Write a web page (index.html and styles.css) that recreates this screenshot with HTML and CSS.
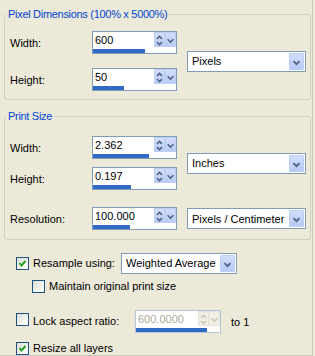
FILE: index.html
```html
<!DOCTYPE html>
<html lang="en">
<head>
  <meta charset="UTF-8">
  <title>Resize</title>
  <link rel="stylesheet" href="styles.css">
</head>
<body>
  <div class="dialog">

    <fieldset class="group group-pixels">
      <legend>Pixel Dimensions (100% x 5000%)</legend>
      <div class="grid">
        <label class="field-label">Width:</label>
        <div class="spin">
          <div class="spin-top">
            <span class="spin-text">600</span>
            <span class="spin-btn updown"><svg width="11" height="15" viewBox="0 0 11 15"><path d="M2.5 5.5 L5.5 2.5 L8.5 5.5 M2.5 9.5 L5.5 12.5 L8.5 9.5" /></svg></span>
            <span class="spin-btn drop"><svg width="11" height="15" viewBox="0 0 11 15"><path d="M2 6 L5.5 9.5 L9 6" /></svg></span>
          </div>
          <div class="spin-bar"><span class="spin-fill" style="width:63%"></span></div>
        </div>
        <label class="field-label">Height:</label>
        <div class="spin">
          <div class="spin-top">
            <span class="spin-text">50</span>
            <span class="spin-btn updown"><svg width="11" height="15" viewBox="0 0 11 15"><path d="M2.5 5.5 L5.5 2.5 L8.5 5.5 M2.5 9.5 L5.5 12.5 L8.5 9.5" /></svg></span>
            <span class="spin-btn drop"><svg width="11" height="15" viewBox="0 0 11 15"><path d="M2 6 L5.5 9.5 L9 6" /></svg></span>
          </div>
          <div class="spin-bar"><span class="spin-fill" style="width:37%"></span></div>
        </div>
        <div class="select select-span">
          <span class="select-text">Pixels</span>
          <span class="select-btn"><svg width="15" height="17" viewBox="0 0 15 17"><path d="M4 7 L7.5 10.5 L11 7" /></svg></span>
        </div>
      </div>
    </fieldset>

    <fieldset class="group group-print">
      <legend>Print Size</legend>
      <div class="grid grid-print">
        <label class="field-label">Width:</label>
        <div class="spin">
          <div class="spin-top">
            <span class="spin-text">2.362</span>
            <span class="spin-btn updown"><svg width="11" height="15" viewBox="0 0 11 15"><path d="M2.5 5.5 L5.5 2.5 L8.5 5.5 M2.5 9.5 L5.5 12.5 L8.5 9.5" /></svg></span>
            <span class="spin-btn drop"><svg width="11" height="15" viewBox="0 0 11 15"><path d="M2 6 L5.5 9.5 L9 6" /></svg></span>
          </div>
          <div class="spin-bar"><span class="spin-fill" style="width:67%"></span></div>
        </div>
        <label class="field-label">Height:</label>
        <div class="spin">
          <div class="spin-top">
            <span class="spin-text">0.197</span>
            <span class="spin-btn updown"><svg width="11" height="15" viewBox="0 0 11 15"><path d="M2.5 5.5 L5.5 2.5 L8.5 5.5 M2.5 9.5 L5.5 12.5 L8.5 9.5" /></svg></span>
            <span class="spin-btn drop"><svg width="11" height="15" viewBox="0 0 11 15"><path d="M2 6 L5.5 9.5 L9 6" /></svg></span>
          </div>
          <div class="spin-bar"><span class="spin-fill" style="width:46%"></span></div>
        </div>
        <div class="select select-span">
          <span class="select-text">Inches</span>
          <span class="select-btn"><svg width="15" height="17" viewBox="0 0 15 17"><path d="M4 7 L7.5 10.5 L11 7" /></svg></span>
        </div>
      </div>
      <div class="grid grid-res">
        <label class="field-label">Resolution:</label>
        <div class="spin">
          <div class="spin-top">
            <span class="spin-text">100.000</span>
            <span class="spin-btn updown"><svg width="11" height="15" viewBox="0 0 11 15"><path d="M2.5 5.5 L5.5 2.5 L8.5 5.5 M2.5 9.5 L5.5 12.5 L8.5 9.5" /></svg></span>
            <span class="spin-btn drop"><svg width="11" height="15" viewBox="0 0 11 15"><path d="M2 6 L5.5 9.5 L9 6" /></svg></span>
          </div>
          <div class="spin-bar"><span class="spin-fill" style="width:45%"></span></div>
        </div>
        <div class="select select-res">
          <span class="select-text">Pixels / Centimeter</span>
          <span class="select-btn"><svg width="15" height="17" viewBox="0 0 15 17"><path d="M4 7 L7.5 10.5 L11 7" /></svg></span>
        </div>
      </div>
    </fieldset>

    <div class="options">
      <div class="option option-resample">
        <span class="check checked"><svg width="11" height="11" viewBox="0 0 11 11"><path d="M2.5 5 L4.5 7.5 L8.5 3" /></svg></span>
        <span class="option-label label-resample">Resample using:</span>
        <div class="select select-method">
          <span class="select-text">Weighted Average</span>
          <span class="select-btn"><svg width="15" height="17" viewBox="0 0 15 17"><path d="M4 7 L7.5 10.5 L11 7" /></svg></span>
        </div>
      </div>
      <div class="option option-maintain">
        <span class="check"></span>
        <span class="option-label">Maintain original print size</span>
      </div>
      <div class="option option-lock">
        <span class="check check-lock"></span>
        <span class="option-label label-lock">Lock aspect ratio:</span>
        <div class="spin spin-disabled">
          <div class="spin-top">
            <span class="spin-text">600.0000</span>
            <span class="spin-btn updown"><svg width="11" height="15" viewBox="0 0 11 15"><path d="M2.5 5.5 L5.5 2.5 L8.5 5.5 M2.5 9.5 L5.5 12.5 L8.5 9.5" /></svg></span>
            <span class="spin-btn drop"><svg width="11" height="15" viewBox="0 0 11 15"><path d="M2 6 L5.5 9.5 L9 6" /></svg></span>
          </div>
          <div class="spin-bar"><span class="spin-fill" style="width:85%"></span></div>
        </div>
        <span class="ratio">to 1</span>
      </div>
      <div class="option option-layers">
        <span class="check checked"><svg width="11" height="11" viewBox="0 0 11 11"><path d="M2.5 5 L4.5 7.5 L8.5 3" /></svg></span>
        <span class="option-label">Resize all layers</span>
      </div>
    </div>

  </div>
</body>
</html>
```

FILE: styles.css
```css
* {
  box-sizing: border-box;
}
body {
  margin: 0;
  background: #ece9d8;
  font-family: "Liberation Sans", Arial, sans-serif;
  font-size: 11px;
  color: #000;
}
.dialog {
  width: 313px;
  height: 356px;
  border-right: 1px solid #cdcabb;
  border-bottom: 1px solid #cdcabb;
  overflow: hidden;
}

/* Group boxes */
.group {
  margin: 8px 1px 0 4px;
  padding: 10px 4px 8px 5px;
  border: 1px solid #d0d0bf;
  border-radius: 3px;
  min-width: 0;
}
.group legend {
  margin-left: -4px;
  padding: 0 2px;
  line-height: 13px;
  letter-spacing: -0.3px;
  color: #0046d5;
}
.group-print {
  margin-top: 10px;
  padding-top: 13px;
  padding-bottom: 9px;
}
.grid {
  display: grid;
  grid-template-columns: 82px 85px 1fr;
  row-gap: 14px;
  align-items: center;
}
.grid-print {
  row-gap: 8px;
}
.grid-res {
  margin-top: 17px;
}
.field-label {
  padding-top: 1px;
}

/* Spin box */
.spin {
  width: 85px;
  height: 23px;
  border: 1px solid #7f9db9;
  background: #fff;
  display: flex;
  flex-direction: column;
}
.spin-top {
  display: flex;
  height: 16px;
}
.spin-text {
  flex: 1;
  padding-left: 2px;
  line-height: 17px;
}
.spin-btn {
  width: 11px;
  height: 15px;
  background: linear-gradient(#d4defb, #b9cbf6);
  border: 1px solid #bed0f6;
  display: flex;
}
.spin-btn svg path {
  fill: none;
  stroke: #4d6185;
  stroke-width: 1.8;
}
.spin-bar {
  height: 4px;
  margin-top: 1px;
}
.spin-fill {
  display: block;
  height: 4px;
  background: #316ac5;
}
.spin-disabled {
  width: 86px;
  border-color: #b6c3d8;
}
.spin-disabled .spin-text {
  color: #aca899;
}
.spin-disabled .spin-btn {
  background: #f1efe6;
  border-color: #e6e4da;
}
.spin-disabled .spin-btn svg path {
  stroke: #c9c7bc;
}

/* Drop-down */
.select {
  height: 21px;
  border: 1px solid #7f9db9;
  background: #fff;
  display: flex;
  align-items: center;
  padding: 1px;
}
.select-span {
  grid-column: 3;
  grid-row: 1 / span 2;
  margin-left: 10px;
}
.select-res {
  grid-column: 3;
  margin-left: 10px;
}
.select-text {
  flex: 1;
  padding-left: 3px;
  white-space: nowrap;
}
.select-btn {
  width: 15px;
  height: 17px;
  background: linear-gradient(#d4defb, #b6c9f6);
  border: 1px solid #bccff6;
  border-radius: 1px;
  display: flex;
}
.select-btn svg path {
  fill: none;
  stroke: #4d6185;
  stroke-width: 2;
}
.select-method {
  width: 116px;
}

/* Options */
.options {
  padding: 13px 0 0 16px;
}
.option {
  display: flex;
  align-items: center;
  gap: 4px;
  height: 20px;
}
.option-maintain {
  margin-top: 3px;
  padding-left: 16px;
}
.option-lock {
  margin-top: 14px;
  height: 23px;
}
.option-layers {
  margin-top: 8px;
  height: 14px;
}
.check {
  width: 13px;
  height: 13px;
  flex: none;
  border: 1px solid #1c5180;
  background: linear-gradient(135deg, #dcdcd5, #fbfbf9 80%);
  display: flex;
}
.check svg path {
  fill: none;
  stroke: #21a121;
  stroke-width: 2;
}
.check-lock {
  margin-bottom: 4px;
}
.option-label {
  white-space: nowrap;
}
.label-resample {
  width: 84px;
}
.label-lock {
  width: 98px;
  margin-bottom: 2px;
}
.ratio {
  margin-left: 6px;
}
```
